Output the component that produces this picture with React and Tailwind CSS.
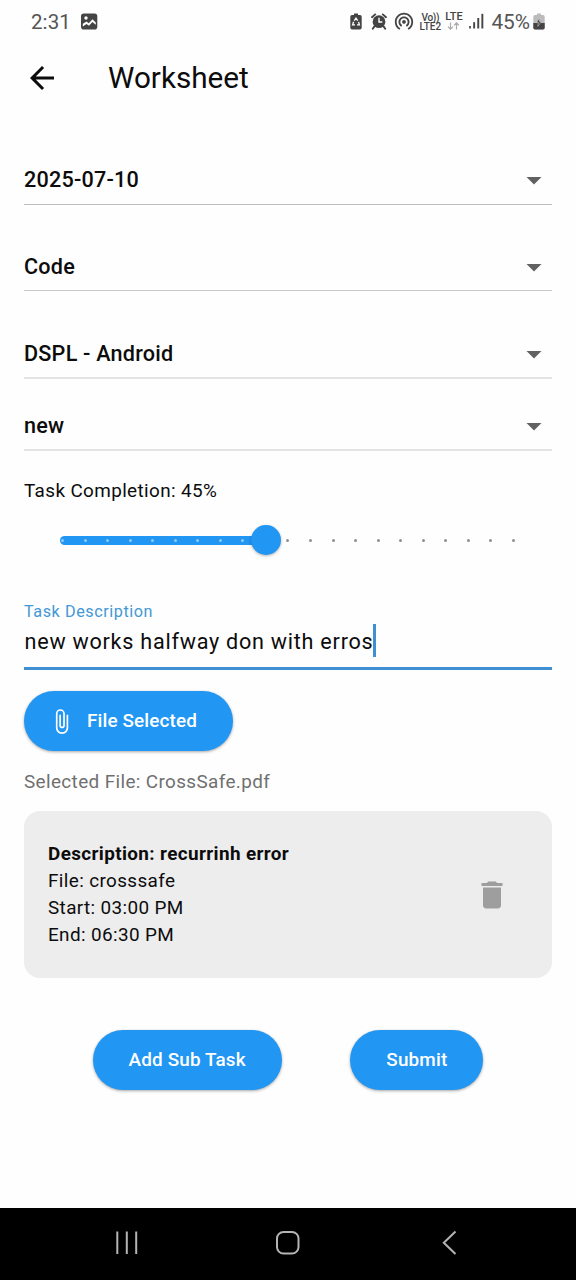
import React from "react";
import { MdArrowBack, MdArrowDropDown, MdAttachFile, MdDelete, MdWifiTethering } from "react-icons/md";

const ticks = Array.from({ length: 21 }, (_, i) => i);

function StatusBar() {
  return (
    <div className="flex h-[42px] items-center justify-between pl-[31px] pr-[31px] text-[#555]">
      <div className="flex items-center">
        <span className="pt-px text-[20.5px] leading-6 tracking-[0.1px]">2:31</span>
        <svg className="ml-[10px]" width="17" height="17" viewBox="0 0 17 17">
          <rect x="0" y="0.5" width="16.3" height="16" rx="2.8" fill="#444" />
          <path d="M1.8 10.8 L5.5 8.6 L7.8 10.2 L11.5 6.3 L14.8 9.4 V11.8 L11.4 8.9 L8 12.8 L5.5 11 L1.8 13.6 Z" fill="#fff" />
          <circle cx="5" cy="5" r="1.7" fill="#fff" />
        </svg>
      </div>
      <div className="flex items-center text-[#444]">
        <svg width="12" height="17" viewBox="0 0 12 17">
          <path d="M4 0.5 H8 V2 H10 Q11.7 2 11.7 3.7 V14.8 Q11.7 16.5 10 16.5 H2 Q0.3 16.5 0.3 14.8 V3.7 Q0.3 2 2 2 H4 Z" fill="#444" />
          <path d="M4.3 7.6 L6 5.2 L7.7 7.6 M8.6 8.8 L9.4 11.8 H7 M5 11.8 H2.6 L3.6 8.8" fill="none" stroke="#fff" strokeWidth="1.3" />
        </svg>
        <svg className="ml-[9px]" width="16" height="17" viewBox="0 0 16 17">
          <circle cx="8" cy="8.7" r="6.4" fill="#444" />
          <path d="M1 4.2 L4.2 1.4 M15 4.2 L11.8 1.4 M3.4 13.4 L1.8 15.8 M12.6 13.4 L14.2 15.8" stroke="#444" strokeWidth="1.9" strokeLinecap="round" />
          <path d="M8 4.8 V9 H11.3" fill="none" stroke="#fff" strokeWidth="1.4" />
        </svg>
        <MdWifiTethering className="ml-[6px] h-[22px] w-[22px]" />
        <div className="ml-[4px] flex w-[22px] flex-col items-center pt-px text-[10px] font-medium leading-[9px] tracking-[-0.3px]">
          <span className="whitespace-nowrap">Vo))</span>
          <span className="tracking-[0px]">LTE2</span>
        </div>
        <div className="ml-[3px] flex w-[19px] flex-col items-center">
          <span className="text-[11px] font-medium leading-[9px]">LTE</span>
          <svg className="mt-px" width="13" height="8" viewBox="0 0 13 8" fill="none" stroke="#aaa" strokeWidth="1.2">
            <path d="M3.5 0.5 V7 M1 4.6 L3.5 7.2 L6 4.6 M9.5 7.6 V1 M7 3.4 L9.5 0.8 L12 3.4" />
          </svg>
        </div>
        <svg className="ml-[6px]" width="15" height="16" viewBox="0 0 15 16" fill="#444">
          <rect x="0.2" y="13" width="1.7" height="2.5" />
          <rect x="4.2" y="9.2" width="1.9" height="6.3" />
          <rect x="8.3" y="5" width="1.9" height="10.5" />
          <rect x="12.4" y="0.8" width="1.9" height="14.7" />
        </svg>
        <span className="ml-[7px] pt-px text-[20.8px] leading-6 text-[#555]">45%</span>
        <svg className="ml-[3px]" width="12" height="17" viewBox="0 0 12 17">
          <path d="M4 0.5 H8 V2 H10 Q11.7 2 11.7 3.7 V14.8 Q11.7 16.5 10 16.5 H2 Q0.3 16.5 0.3 14.8 V3.7 Q0.3 2 2 2 H4 Z" fill="#bbb" />
          <path d="M0.3 10 H11.7 V14.8 Q11.7 16.5 10 16.5 H2 Q0.3 16.5 0.3 14.8 Z" fill="#444" />
          <path d="M6.8 4.8 L3.4 9.6 H5.4 L4.8 13.4 L8.6 8.4 H6.4 Z" fill="#444" stroke="#ddd" strokeWidth="0.5" />
        </svg>
      </div>
    </div>
  );
}

function SelectField({ value, className }) {
  return (
    <div className={"flex items-center justify-between text-[21.6px] font-medium tracking-[0.225px] " + className}>
      <span className="leading-[30px]">{value}</span>
      <MdArrowDropDown className="h-9 w-9 text-[#616161]" />
    </div>
  );
}

function TaskSlider({ steps }) {
  const percent = steps * 5;
  return (
    <div className="relative ml-9 mr-[35px] mt-[31px] flex h-[10px] items-center">
      <div className="absolute left-0 h-[9px] rounded-full bg-[#2196f3]" style={{ width: percent + "%" }} />
      <div className="relative flex flex-1 justify-between pl-[1px] pr-[2px]">
        {ticks.map((i) => (
          <span key={i} className={"h-[3px] w-[3px] rounded-full " + (i < steps ? "bg-[#90caf9]" : "bg-[#8f8f8f]")} />
        ))}
      </div>
      <div
        className="absolute h-[30px] w-[30px] -translate-x-1/2 rounded-full bg-[#2196f3] shadow-[0_1px_3px_rgba(0,0,0,0.3)]"
        style={{ left: percent + "%" }}
      />
    </div>
  );
}

function PillButton({ children, className }) {
  return (
    <button
      className={
        "flex h-[60px] items-center justify-center rounded-full bg-[#2196f3] text-[18.9px] font-medium tracking-[0.15px] text-white shadow-[0_1px_3px_rgba(0,0,0,0.35)] " +
        className
      }
    >
      {children}
    </button>
  );
}

export default function App() {
  return (
    <div className="flex h-[1280px] w-[576px] flex-col overflow-hidden bg-[#fefefe] font-['Roboto',sans-serif] text-[#0c0c0c]">
      <StatusBar />
      <header className="flex h-[72px] items-center pl-6">
        <MdArrowBack className="h-9 w-9" />
        <h1 className="ml-12 text-[29.7px] leading-9">Worksheet</h1>
      </header>

      <main className="flex flex-1 flex-col px-6 pt-[42px]">
        <SelectField value="2025-07-10" className="h-[49px] border-b border-[#bdbdbd]" />
        <SelectField value="Code" className="mt-[37px] h-[49px] border-b border-[#c8c8c8] pt-[2px]" />
        <SelectField value="DSPL - Android" className="mt-[38px] h-[50px] border-b-2 border-[#e3e3e3] pt-[2px]" />
        <SelectField value="new" className="mt-[22px] h-[50px] border-b-2 border-[#e3e3e3] pt-[2px]" />

        <p className="mt-[26px] text-[18.9px] leading-[27px] tracking-[0.375px]">Task Completion: 45%</p>
        <TaskSlider steps={9} />

        <label className="mt-[55px] text-[16.2px] leading-6 tracking-[0.56px] text-[#4398d5]">Task Description</label>
        <div className="flex h-[46px] items-start border-b-[3px] border-[#3f90d3]">
          <span className="pl-[0.5px] pt-[3px] text-[21.6px] leading-[30px] tracking-[0.75px]">new works halfway don with erros</span>
          <span className="h-[33px] w-[3px] bg-[#3f90d3]" />
        </div>

        <PillButton className="mt-[21px] w-[209px] self-start pr-[12px]">
          <MdAttachFile className="mr-[12px] h-[27px] w-[27px]" />
          File Selected
        </PillButton>
        <p className="mt-[17px] text-[18.9px] leading-[27px] tracking-[0.375px] text-[#707070]">Selected File: CrossSafe.pdf</p>

        <section className="mt-[16px] flex h-[167px] items-center justify-between rounded-[16px] bg-[#ededed] pl-6 pr-[42px]">
          <div className="-mt-px text-[18.9px] leading-[27px] tracking-[0.375px]">
            <p className="font-bold">Description: recurrinh error</p>
            <p>File: crosssafe</p>
            <p>Start: 03:00 PM</p>
            <p>End: 06:30 PM</p>
          </div>
          <MdDelete className="h-9 w-9 text-[#9e9e9e]" />
        </section>

        <div className="mt-[52px] flex justify-evenly">
          <PillButton className="w-[189px]">Add Sub Task</PillButton>
          <PillButton className="w-[133px]">Submit</PillButton>
        </div>
      </main>

      <nav className="flex h-[72px] items-center bg-black">
        <svg width="576" height="72" viewBox="0 0 576 72" fill="none" stroke="#b4b4b4" strokeWidth="2">
          <path d="M117.3 23.5 V46 M126.8 23.5 V46 M136.2 23.5 V46" />
          <rect x="277" y="24" width="21.5" height="21.5" rx="6.5" />
          <path d="M455.5 23.5 L443.8 34.8 L455.5 46" />
        </svg>
      </nav>
    </div>
  );
}
